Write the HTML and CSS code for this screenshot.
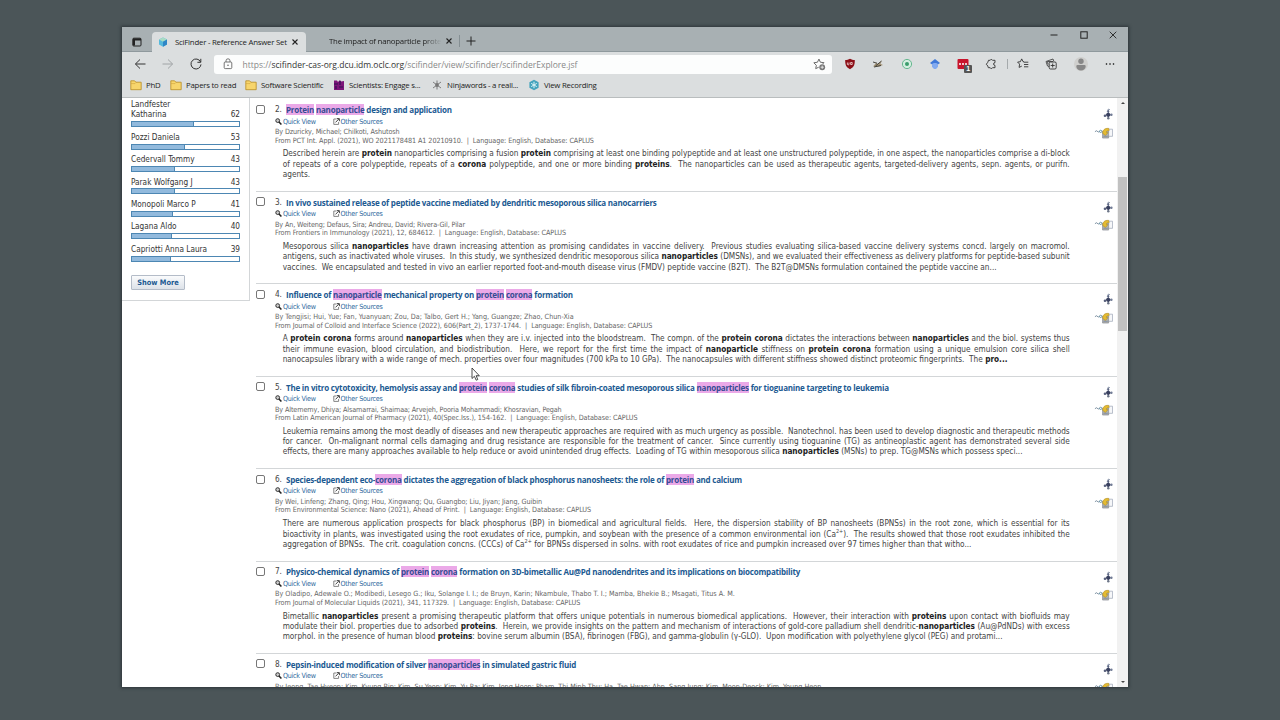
FILE: index.html
```html
<!DOCTYPE html>
<html lang="en">
<head>
  <meta charset="UTF-8" />
  <title>SciFinder - Reference Answer Set</title>
  <link rel="stylesheet" href="styles.css">
</head>
<body>
  <svg class="sprite" width="0" height="0">
    <symbol id="folder" viewBox="0 0 12 12"><path d="M.8 1.8h3.8l1.3 1.4h5.3v7.5H.8z" fill="#f7d56c" stroke="#b88b22" stroke-width=".8"/><path d="M1 4.6h4l1-1.2" fill="none" stroke="#d0a23a" stroke-width=".6"/></symbol>
    <symbol id="close" viewBox="0 0 8 8"><path d="M1.5 1.5l5 5M6.5 1.5l-5 5" stroke="#222" stroke-width="1.1"/></symbol>
    <symbol id="glass" viewBox="0 0 7 7"><circle cx="2.7" cy="2.6" r="1.9" fill="#ccc" stroke="#333" stroke-width="1"/><path d="M4 4l2.4 2.5" stroke="#222" stroke-width="1.5"/></symbol>
    <symbol id="ext" viewBox="0 0 7 7"><path d="M3.4 1H.8v5.4h4.8V4" fill="none" stroke="#777" stroke-width=".9"/><path d="M2.5 4.4L5.8 1M3.8.6h2.6v2.6" fill="none" stroke="#444" stroke-width="1"/></symbol>
    <symbol id="reaction" viewBox="0 0 10 12"><path d="M5.3 1.5v9M1.5 8L5 6l3.8 1.2" fill="none" stroke="#5d6580" stroke-width="1"/><path d="M4.2 3.6L5.5 1l1.5.8" fill="none" stroke="#98a2b5" stroke-width="1"/><circle cx="5.2" cy="6.8" r="2.1" fill="#39405f"/><circle cx="5.3" cy="3.5" r="1.1" fill="#5d6684"/><circle cx="2" cy="7.8" r="1.3" fill="#59617d"/><circle cx="8.4" cy="6.8" r="1.2" fill="#737d97"/><circle cx="5.3" cy="10.3" r="1.2" fill="#6d7688"/></symbol>
    <symbol id="fulltext" viewBox="0 0 20 12"><path d="M1 4.6l1.8-1 1.6 1.4 1.4-.6" fill="none" stroke="#5a7188" stroke-width=".8"/><circle cx="7" cy="4.3" r="1.2" fill="none" stroke="#4d8298" stroke-width=".8"/><path d="M13 2h6.500v7.500H13z" fill="#f6f7f9" stroke="#a3acbb" stroke-width=".8"/><path d="M9 4h6.4v7.3H9z" fill="#b0b1ab" stroke="#858a94" stroke-width=".7"/><path d="M10 9.5h4.5" stroke="#7889a6" stroke-width=".8"/><path d="M9.2 6.5C9 3 11 .8 15.5 1.1L16 3.6c-2-.3-3.2.5-2.8 2h1.6L12 8.6z" fill="#e4bb32" stroke="#a68420" stroke-width=".5"/></symbol>
  </svg>
  <div class="window">
    <div class="tabstrip">
      <svg class="tab-menu" viewBox="0 0 10 10"><rect x=".8" y="1.2" width="8.2" height="7.8" rx="1" fill="none" stroke="#222"/><path d="M1 1.5h8v2H1zM1 3h2v5.5H1z" fill="#222"/></svg>
      <div class="tab active">
        <svg class="fav" viewBox="0 0 10 10"><path d="M5 .4l4 2v5.2L5 9.8 1 7.4V2.6z" fill="#55b9dc"/><path d="M5 .4l4 2-4 2.4-4-2.2z" fill="#a9dcc4"/><path d="M5 4.8l4-2.4v5.2L5 9.8z" fill="#2f86c6"/></svg>
        <span>SciFinder - Reference Answer Set</span>
        <svg class="x"><use href="#close"/></svg>
      </div>
      <div class="tab second">
        <span>The impact of nanoparticle prote</span>
        <svg class="x"><use href="#close"/></svg>
      </div>
      <div class="tab-sep"></div>
      <svg class="plus" viewBox="0 0 10 10"><path d="M5 .5v9M.5 5h9" stroke="#222" stroke-width="1"/></svg>
      <div class="win-buttons">
        <svg viewBox="0 0 8 8"><path d="M.5 4h7" stroke="#222"/></svg>
        <svg viewBox="0 0 8 8"><rect x=".8" y=".8" width="6.4" height="6.4" fill="none" stroke="#222"/></svg>
        <svg viewBox="0 0 8 8"><path d="M.7.7l6.6 6.6M7.3.7L.7 7.3" stroke="#222" stroke-width=".9"/></svg>
      </div>
    </div>
    <div class="toolbar">
      <div class="nav">
        <svg viewBox="0 0 12 12"><path d="M11.5 6h-10M6 1.5L1.4 6 6 10.5" fill="none" stroke="#333"/></svg>
        <svg viewBox="0 0 12 12"><path d="M.5 6h10M6 1.5L10.6 6 6 10.5" fill="none" stroke="#a0a4a6"/></svg>
        <svg viewBox="0 0 12 12"><path d="M10.6 4A5 5 0 1 0 11 6.4M10.8.8v3.5H7.4" fill="none" stroke="#333"/></svg>
      </div>
      <div class="address">
        <svg class="lock" viewBox="0 0 10 12"><rect x="1.2" y="4" width="7.6" height="6.6" rx="1" fill="none" stroke="#666" stroke-width=".9"/><path d="M3 4V2.8a2 2 0 0 1 4 0V4" fill="none" stroke="#666" stroke-width=".9"/><circle cx="5" cy="7.3" r=".8" fill="#666"/></svg>
        <span class="url">https://<b>scifinder-cas-org.dcu.idm.oclc.org</b>/scifinder/view/scifinder/scifinderExplore.jsf</span>
        <svg class="star" viewBox="0 0 12 12"><path d="M5.3 8.5L2.5 9.8l.6-3L.8 4.4l3.3-.5L5.5 1l1.3 2.9 3.300.4-1.200 1.200" fill="none" stroke="#555" stroke-width=".8"/><circle cx="8.5" cy="8.5" r="2.7" fill="#777"/><path d="M8.5 7v3M7 8.5h3" stroke="#eee" stroke-width=".8"/></svg>
      </div>
      <div class="extensions">
        <svg viewBox="0 0 12 12"><path d="M6 .8c1.5.9 3 1.2 4.8 1.2 0 4.5-.5 7-4.8 9.2C1.7 9 1.2 6.5 1.2 2 3 2 4.5 1.7 6 .8z" fill="#8c1018"/><path d="M3.4 4.5v2q.8.8 1.6 0v-2M6.6 4.5h1.6v2H6.6z" fill="none" stroke="#f3dada" stroke-width=".8"/></svg>
        <svg viewBox="0 0 12 12"><path d="M1 8.5l3-3.5 2 1 4-3.3-1.5 3L11 7 7 8.6z" fill="#a49477"/><path d="M1 4l4 1.2M3.5 8l6-5M2 9l7-1.5" stroke="#373530" stroke-width=".9"/></svg>
        <svg viewBox="0 0 12 12"><circle cx="6" cy="6" r="4.6" fill="#d4eee0" stroke="#67b890"/><circle cx="6" cy="6" r="2" fill="#3a9c6c"/></svg>
        <svg viewBox="0 0 12 12"><path d="M6 1l5 4-5 3.5L1 5z" fill="#3f78d8"/><path d="M3 6c1-1.5 5-1.5 6 0v2.5C8 10.5 7 11 6 11s-2-.5-3-2.5z" fill="#82aaf0"/></svg>
        <div class="ext-badge">
          <svg viewBox="0 0 12 12"><rect x=".5" y="1" width="11" height="10" rx="1" fill="#c8142c"/><path d="M2 6h2M5 6h2M8 6h2" stroke="#fff" stroke-width="1.5"/></svg>
          <span>1</span>
        </div>
        <svg viewBox="0 0 12 12"><path d="M3.500 2.300h1.600a1.300 1.300 0 0 1 2.400 0h2.500v2.300a1.400 1.400 0 1 0 0 2.800v2.300H7.500a1.300 1.300 0 0 1-2.400 0H3.300L2.800 8 1.300 6.200l1.500-1.900z" fill="none" stroke="#333" stroke-width=".9"/></svg>
        <i class="ext-sep"></i>
        <svg viewBox="0 0 12 12"><path d="M7 3.8L6 3.6 4.7.9 3.4 3.7.6 4.1l2 2-.5 3.3 2.7-1.3M6.8 4.2h4.5M7 6.5h4.3M7 8.8h4.3" fill="none" stroke="#333" stroke-width=".9"/></svg>
        <svg viewBox="0 0 12 12"><path d="M4 8.5L2.5 8 1 3.500 8 1l.8 2.200M3 6.500L2.500 3.500H8" fill="none" stroke="#333" stroke-width=".8"/><rect x="4.2" y="4" width="7" height="7" rx="1.3" fill="#dbdedf" stroke="#333" stroke-width=".9"/><path d="M7.7 5.5v4M5.7 7.5h4" stroke="#333" stroke-width=".9"/></svg>
        <svg class="avatar" viewBox="0 0 14 14"><circle cx="7" cy="7" r="7" fill="#cfcfcd"/><circle cx="7" cy="4.2" r="2.7" fill="#878787"/><path d="M2.3 9.3q0-1.3 1.3-1.3h6.8q1.3 0 1.3 1.3c0 2.6-2 4.2-4.7 4.2s-4.7-1.6-4.7-4.2z" fill="#878787"/></svg>
        <svg viewBox="0 0 12 12"><circle cx="2.5" cy="6" r=".8"/><circle cx="6" cy="6" r=".8"/><circle cx="9.5" cy="6" r=".8"/></svg>
      </div>
    </div>
    <div class="bookmarks">
      <div class="bm bm-phd"><svg><use href="#folder"/></svg>PhD</div>
      <div class="bm bm-papers"><svg><use href="#folder"/></svg>Papers to read</div>
      <div class="bm bm-software"><svg><use href="#folder"/></svg>Software Scientific</div>
      <div class="bm bm-engage"><svg viewBox="0 0 12 12"><path d="M1 1.5h3L5 3l2-2 1 1.5 3-.5v9H1z" fill="#7d1479"/><path d="M1 5h4M7 2v4M3 7v3M6 8h4" stroke="#301052" stroke-width="1.2"/></svg>Scientists: Engage s...</div>
      <div class="bm bm-ninja"><svg viewBox="0 0 12 12"><path d="M6 1.5v9M2 3l8 6M2 9l8-6" stroke="#666" stroke-width=".8"/><circle cx="6" cy="6" r="1.9" fill="#777"/></svg>Ninjawords - a reall...</div>
      <div class="bm bm-record"><svg viewBox="0 0 12 12"><path d="M6 .7l4.6 2.6v5.4L6 11.3 1.4 8.7V3.3z" fill="#43a3bd"/><path d="M6 2.8v6.4M3.2 4.4l5.6 3.2M3.2 7.6l5.6-3.2" stroke="#dcf3f6" stroke-width="1"/></svg>View Recording</div>
    </div>

    <div class="page">
      <div class="sidebar">
        <div class="facet first"><p><span>Landfester<br>Katharina</span><span>62</span></p><div class="bar"><div style="width: 62px"></div></div></div>
        <div class="facet"><p><span>Pozzi Daniela</span><span>53</span></p><div class="bar"><div style="width: 53px"></div></div></div>
        <div class="facet"><p><span>Cedervall Tommy</span><span>43</span></p><div class="bar"><div style="width: 43px"></div></div></div>
        <div class="facet"><p><span>Parak Wolfgang J</span><span>43</span></p><div class="bar"><div style="width: 43px"></div></div></div>
        <div class="facet"><p><span>Monopoli Marco P</span><span>41</span></p><div class="bar"><div style="width: 41px"></div></div></div>
        <div class="facet"><p><span>Lagana Aldo</span><span>40</span></p><div class="bar"><div style="width: 40px"></div></div></div>
        <div class="facet"><p><span>Capriotti Anna Laura</span><span>39</span></p><div class="bar"><div style="width: 39px"></div></div></div>
        <button class="show-more">Show More</button>
      </div>

      <div class="results">
        <div class="item">
          <input type="checkbox">
          <div class="body">
            <h3><span>2.</span><a><mark>Protein</mark> <mark>nanoparticle</mark> design and application</a></h3>
            <div class="links"><a><svg><use href="#glass"/></svg>Quick View</a><a><svg><use href="#ext"/></svg>Other Sources</a></div>
            <div class="meta"><span class="tight">By Dzuricky, Michael; Chilkoti, Ashutosh</span><span>From PCT Int. Appl. (2021), WO 2021178481 A1 20210910.&nbsp; |&nbsp; Language: English, Database: CAPLUS</span></div>
            <div class="abstract">
              <span>Described herein are <b>protein</b> nanoparticles comprising a fusion <b>protein</b> comprising at least one binding polypeptide and at least one unstructured polypeptide, in one aspect, the nanoparticles comprise a di-block</span>
              <span>of repeats of a core polypeptide, repeats of a <b>corona</b> polypeptide, and one or more binding <b>proteins</b>.&nbsp; The nanoparticles can be used as therapeutic agents, targeted-delivery agents, sepn. agents, or purifn.</span>
              <span class="last">agents.</span>
            </div>
          </div>
          <div class="actions"><svg class="rx"><use href="#reaction"/></svg><svg class="ft"><use href="#fulltext"/></svg></div>
        </div>
        <div class="item">
          <input type="checkbox">
          <div class="body">
            <h3><span>3.</span><a>In vivo sustained release of peptide vaccine mediated by dendritic mesoporous silica nanocarriers</a></h3>
            <div class="links"><a><svg><use href="#glass"/></svg>Quick View</a><a><svg><use href="#ext"/></svg>Other Sources</a></div>
            <div class="meta"><span class="tight">By An, Weiteng; Defaus, Sira; Andreu, David; Rivera-Gil, Pilar</span><span>From Frontiers in Immunology (2021), 12, 684612.&nbsp; |&nbsp; Language: English, Database: CAPLUS</span></div>
            <div class="abstract">
              <span>Mesoporous silica <b>nanoparticles</b> have drawn increasing attention as promising candidates in vaccine delivery.&nbsp; Previous studies evaluating silica-based vaccine delivery systems concd. largely on macromol.</span>
              <span>antigens, such as inactivated whole viruses.&nbsp; In this study, we synthesized dendritic mesoporous silica <b>nanoparticles</b> (DMSNs), and we evaluated their effectiveness as delivery platforms for peptide-based subunit</span>
              <span class="last">vaccines.&nbsp; We encapsulated and tested in vivo an earlier reported foot-and-mouth disease virus (FMDV) peptide vaccine (B2T).&nbsp; The B2T@DMSNs formulation contained the peptide vaccine an...</span>
            </div>
          </div>
          <div class="actions"><svg class="rx"><use href="#reaction"/></svg><svg class="ft"><use href="#fulltext"/></svg></div>
        </div>
        <div class="item">
          <input type="checkbox">
          <div class="body">
            <h3><span>4.</span><a>Influence of <mark>nanoparticle</mark> mechanical property on <mark>protein</mark> <mark>corona</mark> formation</a></h3>
            <div class="links"><a><svg><use href="#glass"/></svg>Quick View</a><a><svg><use href="#ext"/></svg>Other Sources</a></div>
            <div class="meta"><span class="loose">By Tengjisi; Hui, Yue; Fan, Yuanyuan; Zou, Da; Talbo, Gert H.; Yang, Guangze; Zhao, Chun-Xia</span><span>From Journal of Colloid and Interface Science (2022), 606(Part_2), 1737-1744.&nbsp; |&nbsp; Language: English, Database: CAPLUS</span></div>
            <div class="abstract">
              <span>A <b>protein corona</b> forms around <b>nanoparticles</b> when they are i.v. injected into the bloodstream.&nbsp; The compn. of the <b>protein corona</b> dictates the interactions between <b>nanoparticles</b> and the biol. systems thus</span>
              <span>their immune evasion, blood circulation, and biodistribution.&nbsp; Here, we report for the first time the impact of <b>nanoparticle</b> stiffness on <b>protein corona</b> formation using a unique emulsion core silica shell</span>
              <span class="last">nanocapsules library with a wide range of mech. properties over four magnitudes (700 kPa to 10 GPa).&nbsp; The nanocapsules with different stiffness showed distinct proteomic fingerprints.&nbsp; The <b>pro...</b></span>
            </div>
          </div>
          <div class="actions"><svg class="rx"><use href="#reaction"/></svg><svg class="ft"><use href="#fulltext"/></svg></div>
        </div>
        <div class="item">
          <input type="checkbox">
          <div class="body">
            <h3><span>5.</span><a>The in vitro cytotoxicity, hemolysis assay and <mark>protein</mark> <mark>corona</mark> studies of silk fibroin-coated mesoporous silica <mark>nanoparticles</mark> for tioguanine targeting to leukemia</a></h3>
            <div class="links"><a><svg><use href="#glass"/></svg>Quick View</a><a><svg><use href="#ext"/></svg>Other Sources</a></div>
            <div class="meta"><span class="tight">By Altememy, Dhiya; Alsamarrai, Shaimaa; Arvejeh, Pooria Mohammadi; Khosravian, Pegah</span><span>From Latin American Journal of Pharmacy (2021), 40(Spec.Iss.), 154-162.&nbsp; |&nbsp; Language: English, Database: CAPLUS</span></div>
            <div class="abstract">
              <span>Leukemia remains among the most deadly of diseases and new therapeutic approaches are required with as much urgency as possible.&nbsp; Nanotechnol. has been used to develop diagnostic and therapeutic methods</span>
              <span>for cancer.&nbsp; On-malignant normal cells damaging and drug resistance are responsible for the treatment of cancer.&nbsp; Since currently using tioguanine (TG) as antineoplastic agent has demonstrated several side</span>
              <span class="last">effects, there are many approaches available to help reduce or avoid unintended drug effects.&nbsp; Loading of TG within mesoporous silica <b>nanoparticles</b> (MSNs) to prep. TG@MSNs which possess speci...</span>
            </div>
          </div>
          <div class="actions"><svg class="rx"><use href="#reaction"/></svg><svg class="ft"><use href="#fulltext"/></svg></div>
        </div>
        <div class="item">
          <input type="checkbox">
          <div class="body">
            <h3><span>6.</span><a>Species-dependent eco-<mark>corona</mark> dictates the aggregation of black phosphorus nanosheets: the role of <mark>protein</mark> and calcium</a></h3>
            <div class="links"><a><svg><use href="#glass"/></svg>Quick View</a><a><svg><use href="#ext"/></svg>Other Sources</a></div>
            <div class="meta"><span>By Wei, Linfeng; Zhang, Qing; Hou, Xingwang; Qu, Guangbo; Liu, Jiyan; Jiang, Guibin</span><span>From Environmental Science: Nano (2021), Ahead of Print.&nbsp; |&nbsp; Language: English, Database: CAPLUS</span></div>
            <div class="abstract">
              <span>There are numerous application prospects for black phosphorus (BP) in biomedical and agricultural fields.&nbsp; Here, the dispersion stability of BP nanosheets (BPNSs) in the root zone, which is essential for its</span>
              <span>bioactivity in plants, was investigated using the root exudates of rice, pumpkin, and soybean with the presence of a common environmental ion (Ca<sup>2+</sup>).&nbsp; The results showed that those root exudates inhibited the</span>
              <span class="last">aggregation of BPNSs.&nbsp; The crit. coagulation concns. (CCCs) of Ca<sup>2+</sup> for BPNSs dispersed in solns. with root exudates of rice and pumpkin increased over 97 times higher than that witho...</span>
            </div>
          </div>
          <div class="actions"><svg class="rx"><use href="#reaction"/></svg><svg class="ft"><use href="#fulltext"/></svg></div>
        </div>
        <div class="item">
          <input type="checkbox">
          <div class="body">
            <h3><span>7.</span><a>Physico-chemical dynamics of <mark>protein</mark> <mark>corona</mark> formation on 3D-bimetallic Au@Pd nanodendrites and its implications on biocompatibility</a></h3>
            <div class="links"><a><svg><use href="#glass"/></svg>Quick View</a><a><svg><use href="#ext"/></svg>Other Sources</a></div>
            <div class="meta"><span class="loose">By Oladipo, Adewale O.; Modibedi, Lesego G.; Iku, Solange I. I.; de Bruyn, Karin; Nkambule, Thabo T. I.; Mamba, Bhekie B.; Msagati, Titus A. M.</span><span>From Journal of Molecular Liquids (2021), 341, 117329.&nbsp; |&nbsp; Language: English, Database: CAPLUS</span></div>
            <div class="abstract">
              <span>Bimetallic <b>nanoparticles</b> present a promising therapeutic platform that offers unique potentials in numerous biomedical applications.&nbsp; However, their interaction with <b>proteins</b> upon contact with biofluids may</span>
              <span>modulate their biol. properties due to adsorbed <b>proteins</b>.&nbsp; Herein, we provide insights on the pattern and mechanism of interactions of gold-core palladium shell dendritic-<b>nanoparticles</b> (Au@PdNDs) with excess</span>
              <span class="last">morphol. in the presence of human blood <b>proteins</b>: bovine serum albumin (BSA), fibrinogen (FBG), and gamma-globulin (γ-GLO).&nbsp; Upon modification with polyethylene glycol (PEG) and protami...</span>
            </div>
          </div>
          <div class="actions"><svg class="rx"><use href="#reaction"/></svg><svg class="ft"><use href="#fulltext"/></svg></div>
        </div>
        <div class="item">
          <input type="checkbox">
          <div class="body">
            <h3><span>8.</span><a>Pepsin-induced modification of silver <mark>nanoparticles</mark> in simulated gastric fluid</a></h3>
            <div class="links"><a><svg><use href="#glass"/></svg>Quick View</a><a><svg><use href="#ext"/></svg>Other Sources</a></div>
            <div class="meta"><span class="loose">By Jeong, Tae Hyeon; Kim, Kyung Bin; Kim, Su Yeon; Kim, Yu Ra; Kim, Jong Hoon; Pham, Thi Minh Thu; Ha, Tae Hwan; Ahn, Sang Jung; Kim, Moon-Deock; Kim, Young Heon</span></div>
          </div>
          <div class="actions"><svg class="rx"><use href="#reaction"/></svg><svg class="ft"><use href="#fulltext"/></svg></div>
        </div>
      </div>

      <div class="scrollbar">
        <i class="up"></i>
        <div class="thumb"></div>
        <i class="down"></i>
      </div>
    </div>
  </div>
  <svg class="cursor" viewBox="0 0 9 14"><path d="M1 1v10.5l2.4-2.2 1.8 3.9 1.6-.7L5.1 8.7h3.2z" fill="#fff" stroke="#222" stroke-width=".8"/></svg>
</body>
</html>
```
FILE: styles.css
```css
body {
  margin: 0;
  height: 720px;
  overflow: hidden;
  background: #4b5558;
  font-family: 'DejaVu Sans Condensed', 'DejaVu Sans', sans-serif;
  color: #333;
}

svg {
  flex: none;
}

.sprite {
  position: absolute;
}

.window {
  width: 1006px;
  height: 660px;
  margin: 27px 0 0 122px;
  overflow: hidden;
  background: #fff;
  box-shadow: 0 0 3px 1px rgba(25, 32, 35, 0.6);
}

.tabstrip {
  display: flex;
  align-items: center;
  height: 25px;
  box-sizing: border-box;
  background: #a8b0b3;
  border-bottom: 1px solid #8f999d;
  font: 7.8px 'Open Sans', sans-serif;
  letter-spacing: -0.22px;
  color: #222;
}

.tab-menu {
  width: 10px;
  height: 10px;
  margin: 5px 0 0 10px;
}

.tab {
  display: flex;
  align-items: center;
  white-space: nowrap;
}

.tab.active {
  width: 154px;
  height: 20px;
  margin: 5px 0 0 10px;
  box-sizing: border-box;
  padding: 0 0 0 6px;
  border-radius: 4px 4px 0 0;
  background: #dbdedf;
}

.tab .fav {
  width: 10px;
  height: 10px;
  margin-right: 7px;
}

.tab.active span {
  width: 116px;
}

.tab .x {
  width: 8px;
  height: 8px;
}

.tab.second {
  margin: 4px 0 0 23px;
}

.tab.second span {
  width: 116px;
  -webkit-mask-image: linear-gradient(90deg, #000 82%, transparent 97%);
  mask-image: linear-gradient(90deg, #000 82%, transparent 97%);
}

.tab-sep {
  width: 1px;
  height: 12px;
  margin: 4px 6px 0 6px;
  background: #858f93;
}

.plus {
  width: 10px;
  height: 10px;
  margin-top: 4px;
}

.win-buttons {
  display: flex;
  gap: 21.5px;
  margin: -8px 11px 0 auto;
}

.win-buttons svg {
  width: 8px;
  height: 8px;
}

.toolbar {
  display: flex;
  align-items: center;
  height: 24px;
  background: #dbdedf;
}

.nav {
  display: flex;
  gap: 16px;
  width: 80px;
  padding-left: 12px;
}

.nav svg, .extensions svg {
  width: 12px;
  height: 12px;
}

.address {
  display: flex;
  align-items: center;
  width: 618px;
  height: 19px;
  box-sizing: border-box;
  padding: 0 6px 0 9px;
  border-radius: 3px;
  background: #fcfdfd;
}

.lock {
  width: 10px;
  height: 12px;
}

.url {
  flex: 1;
  margin-left: 9.5px;
  padding-top: 1px;
  font: 8.5px 'Open Sans', sans-serif;
  color: #888;
}

.url b {
  font-weight: normal;
  color: #333;
}

.star {
  width: 13px;
  height: 13px;
}

.extensions {
  display: flex;
  align-items: center;
  gap: 16.3px;
  margin-left: 12px;
}

.ext-badge {
  position: relative;
  display: flex;
}

.ext-badge span {
  position: absolute;
  right: -3px;
  bottom: -3px;
  width: 8px;
  height: 8px;
  border-radius: 1px;
  background: #555;
  color: #fff;
  font: bold 7px/8px 'Liberation Sans', sans-serif;
  text-align: center;
}

.ext-sep {
  width: 1px;
  height: 10px;
  margin: 0 -7px 0 -7px;
  background: #a5aaac;
}

.extensions .avatar {
  width: 14px;
  height: 14px;
}

.bookmarks {
  display: flex;
  align-items: center;
  height: 22px;
  box-sizing: border-box;
  padding: 0 0 3px 8px;
  background: #dbdedf;
  border-bottom: 1px solid #b9bdbe;
  font: 7.8px 'Open Sans', sans-serif;
  letter-spacing: -0.22px;
  color: #222;
}

.bm {
  display: flex;
  align-items: center;
  gap: 4px;
  white-space: nowrap;
}

.bm svg {
  width: 12px;
  height: 12px;
}

.bm-phd { width: 40px; }
.bm-papers { width: 75px; }
.bm-software { width: 88px; }
.bm-engage { width: 98px; }
.bm-ninja { width: 97px; }

.page {
  display: flex;
  height: 589px;
  align-items: flex-start;
}

.sidebar {
  width: 128px;
  height: 203px;
  box-sizing: border-box;
  padding: 1px 9px 0 9px;
  border-right: 1px solid #d3d6d8;
  border-bottom: 1px solid #d3d6d8;
}

.facet {
  height: 22.45px;
}

.facet.first {
  height: 32.7px;
}

.facet p {
  display: flex;
  justify-content: space-between;
  align-items: flex-end;
  margin: 0 0 1.5px;
  font-size: 8.2px;
  line-height: 10.4px;
}

.bar {
  height: 4px;
  border: 1px solid #4d87b3;
  background: #fff;
}

.bar div {
  height: 4px;
  background: #92badd;
  border-right: 1px solid #4d87b3;
  box-sizing: border-box;
}

.show-more {
  display: block;
  width: 54px;
  height: 15px;
  margin-top: 8.5px;
  padding: 0;
  border: 1px solid #b4bcc8;
  border-radius: 1px;
  background: linear-gradient(#fafbfc, #dde2e9);
  font: bold 7.4px 'DejaVu Sans Condensed', sans-serif;
  color: #1c5a92;
}

.results {
  width: 861px;
  margin-left: 6px;
  padding-top: 1.4px;
}

.item {
  display: flex;
  height: 92.45px;
  box-sizing: border-box;
  border-bottom: 1px solid #d3d6d8;
}

.item input {
  appearance: none;
  width: 9px;
  height: 9px;
  margin: 5.4px 10px 0 0;
  box-sizing: border-box;
  border: 1px solid #777;
  border-radius: 2px;
  background: #fff;
}

.body {
  width: 796px;
}

.body h3 {
  display: flex;
  margin: 4.8px 0 0;
  font: bold 8px/11px 'Open Sans', sans-serif;
  letter-spacing: -0.21px;
  white-space: nowrap;
  color: #1c5a92;
}

.body h3 span {
  width: 11px;
  font: 8.2px/11px 'DejaVu Sans Condensed', sans-serif;
  color: #444;
}

.body mark {
  background: #eba9e8;
  color: #354c93;
}

.links {
  display: flex;
  height: 10px;
  margin-top: 1px;
  font-size: 7.1px;
  line-height: 9px;
  letter-spacing: -0.25px;
  color: #2c679c;
}

.links a {
  display: flex;
  align-items: center;
  width: 57.5px;
}

.links svg {
  width: 7px;
  height: 7px;
  margin-right: 1px;
}

.meta {
  margin-top: 2px;
  font-size: 7.2px;
  line-height: 8.5px;
  letter-spacing: -0.07px;
  color: #666;
  white-space: nowrap;
}

.meta span {
  display: block;
}

.meta .tight {
  letter-spacing: -0.12px;
}

.meta .loose {
  letter-spacing: 0;
}

.abstract {
  margin: 3.3px 0 0 7.7px;
  font-size: 8.2px;
  line-height: 10.3px;
  white-space: nowrap;
  color: #444;
}

.abstract span {
  display: block;
  width: 787px;
  letter-spacing: -0.015px;
  text-align: justify;
  text-align-last: justify;
}

.abstract .last {
  letter-spacing: 0;
  text-align-last: left;
}

.abstract b {
  color: #222;
}

.abstract sup {
  font-size: 5.5px;
  line-height: 0;
}

.actions {
  display: flex;
  flex-direction: column;
  align-items: flex-end;
  width: 42px;
  padding-top: 9px;
  gap: 6.5px;
}

.rx {
  width: 10px;
  height: 12px;
}

.ft {
  width: 19px;
  height: 12px;
}

.scrollbar {
  display: flex;
  flex-direction: column;
  align-items: center;
  width: 11px;
  height: 589px;
  background: #f1f1f1;
}

.thumb {
  width: 9px;
  height: 154px;
  margin-top: 73px;
  background: #c1c1c1;
}

.up, .down {
  border: 2.5px solid transparent;
}

.up {
  margin-top: 2px;
  border-bottom-color: #444;
}

.down {
  margin: auto 0 2px;
  border-top-color: #444;
}

.cursor {
  position: absolute;
  left: 471px;
  top: 367px;
  width: 9px;
  height: 14px;
}
```
